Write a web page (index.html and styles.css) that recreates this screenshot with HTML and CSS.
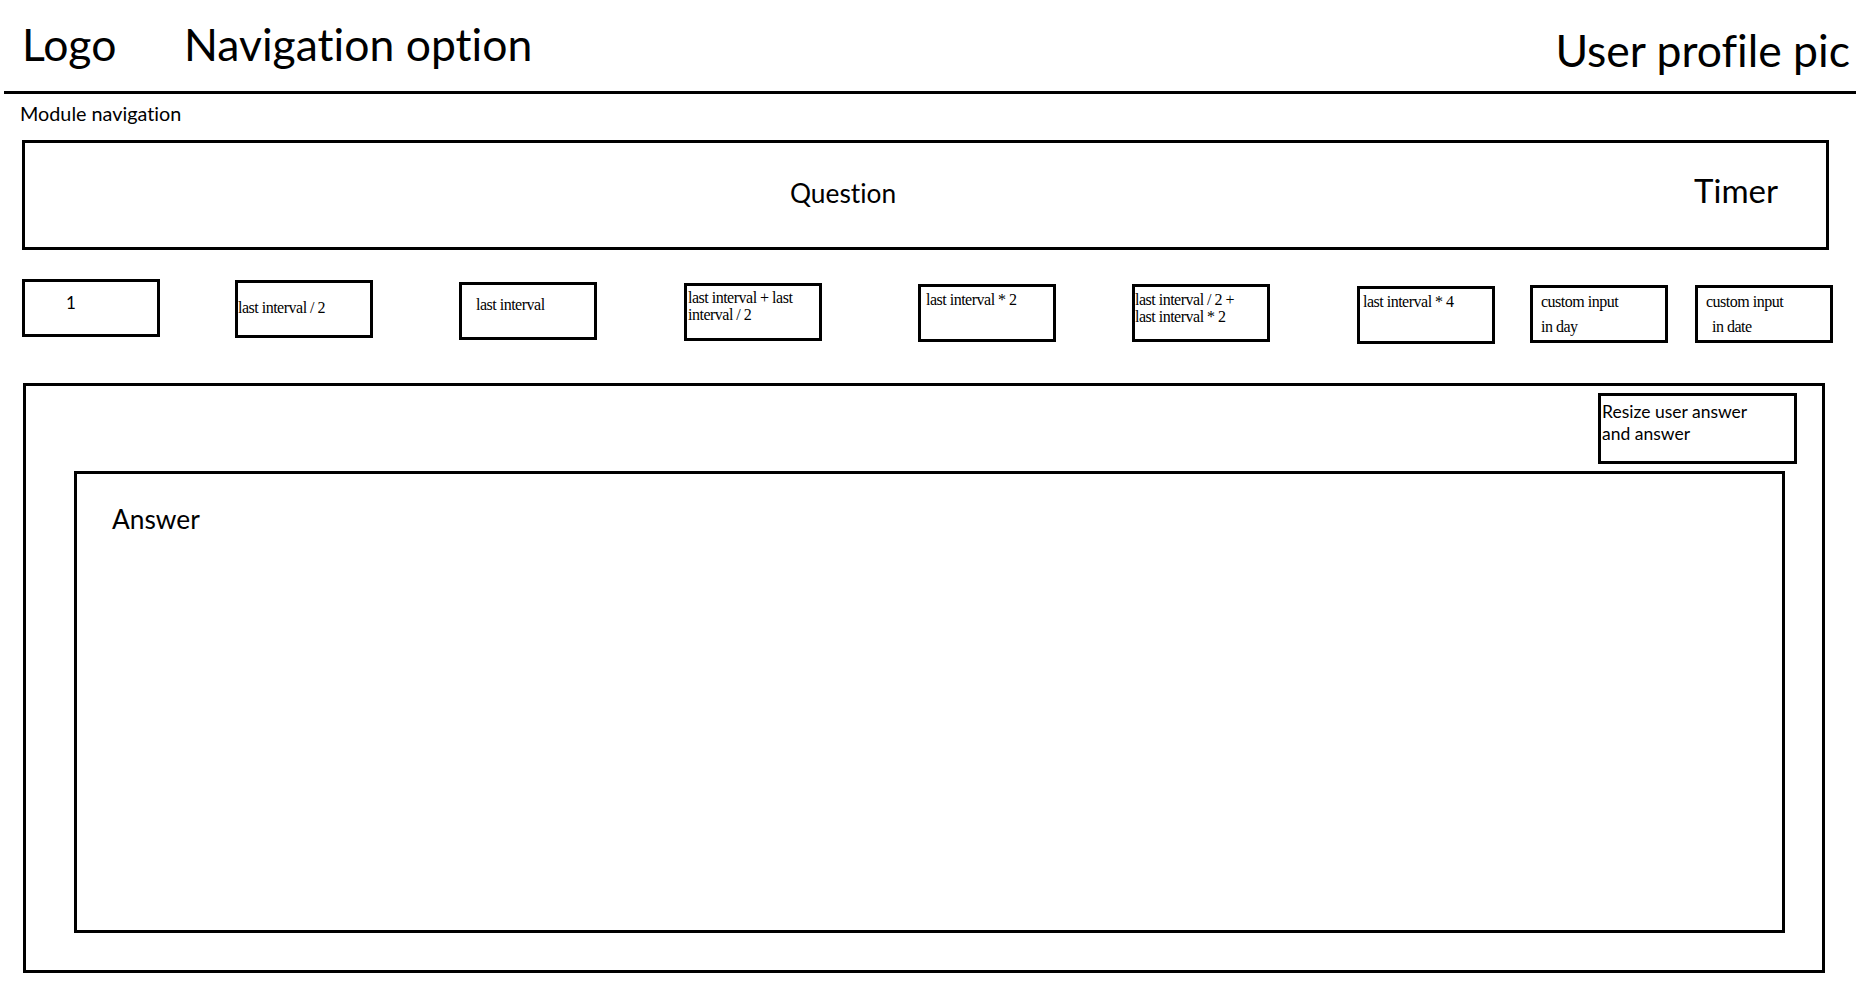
FILE: index.html
```html
<!DOCTYPE html>
<html lang="en">
<head>
<meta charset="utf-8">
<title>Review wireframe</title>
<link rel="stylesheet" href="styles.css">
</head>
<body>
<header class="topbar">
  <div class="brand">Logo</div>
  <nav class="main-nav">Navigation option</nav>
  <div class="profile">User profile pic</div>
</header>
<div class="module-nav">Module navigation</div>
<section class="question-box">
  <span class="question">Question</span>
  <span class="timer">Timer</span>
</section>
<div class="intervals">
  <div class="iv iv-sans">1</div>
  <div class="iv">last interval / 2</div>
  <div class="iv">last interval</div>
  <div class="iv">last interval + last<br>interval / 2</div>
  <div class="iv">last interval * 2</div>
  <div class="iv">last interval / 2 +<br>last interval * 2</div>
  <div class="iv">last interval * 4</div>
  <div class="iv iv-tall">custom input<br>in day</div>
  <div class="iv iv-tall">custom input<br><span class="indent">in date</span></div>
</div>
<section class="answer-area">
  <div class="resize">Resize user answer<br>and answer</div>
  <div class="answer-box"><span class="answer">Answer</span></div>
</section>
</body>
</html>
```

FILE: styles.css
```css
* { box-sizing: border-box; }
html, body { margin: 0; padding: 0; background: #fff; color: #000; }
body {
  font-family: Lato, "Open Sans", sans-serif;
  width: 1856px;
  font-variant-ligatures: none;
  font-feature-settings: "liga" 0, "clig" 0;
}

.topbar {
  display: flex;
  align-items: flex-start;
  height: 94px;
  margin-left: 4px;
  padding: 18px 6px 0 18px;
  border-bottom: 3px solid #000;
  font-size: 44.5px;
  line-height: 52px;
}
.brand { width: 162px; }
.profile { margin-left: auto; margin-top: 6px; }

.module-nav {
  margin: 8px 0 0 20px;
  font-size: 19.8px;
  line-height: 23px;
}

.question-box {
  display: flex;
  align-items: baseline;
  margin: 15px 0 0 22px;
  width: 1807px;
  height: 110px;
  padding-top: 27px;
  border: 3px solid #000;
}
.question { margin-left: 765px; font-size: 26.3px; line-height: 31px; }
.timer { margin-left: auto; margin-right: 48px; font-size: 33px; line-height: 40px; }

.intervals {
  display: flex;
  align-items: flex-start;
  margin: 29px 0 0 22px;
  height: 65px;
}
.iv {
  width: 138px;
  height: 58px;
  border: 3px solid #000;
  font-family: "Liberation Serif", "Times New Roman", serif;
  font-size: 16px;
  line-height: 17px;
  letter-spacing: -0.5px;
  padding: 4px 0 0 3px;
}
.iv-sans {
  font-family: Lato, sans-serif;
  font-size: 17px;
  line-height: 20px;
  letter-spacing: 0;
  padding: 11px 0 0 41px;
}
.iv-tall { line-height: 25px; }
.indent { padding-left: 6px; }

.iv:nth-child(2) { margin: 1px 0 0 75px; padding: 16px 0 0 0; }
.iv:nth-child(3) { margin: 3px 0 0 86px; padding: 11px 0 0 14px; }
.iv:nth-child(4) { margin: 4px 0 0 87px; padding: 3px 0 0 1px; }
.iv:nth-child(5) { margin: 5px 0 0 96px; padding: 4px 0 0 5px; }
.iv:nth-child(6) { margin: 5px 0 0 76px; padding: 4px 0 0 0; }
.iv:nth-child(7) { margin: 7px 0 0 87px; padding: 4px 0 0 3px; }
.iv:nth-child(8) { margin: 6px 0 0 35px; padding: 1px 0 0 8px; }
.iv:nth-child(9) { margin: 6px 0 0 27px; padding: 1px 0 0 8px; }

.answer-area {
  display: flex;
  flex-direction: column;
  margin: 39px 0 0 23px;
  width: 1802px;
  height: 590px;
  padding-top: 7px;
  border: 3px solid #000;
}
.resize {
  flex: none;
  align-self: flex-end;
  width: 199px;
  height: 71px;
  margin-right: 25px;
  padding: 5px 0 0 1px;
  border: 3px solid #000;
  font-size: 17.5px;
  line-height: 22px;
}
.answer-box {
  flex: none;
  margin: 7px 37px 0 48px;
  height: 462px;
  padding: 30px 0 0 35px;
  border: 3px solid #000;
}
.answer { font-size: 26.3px; line-height: 31px; }
```
